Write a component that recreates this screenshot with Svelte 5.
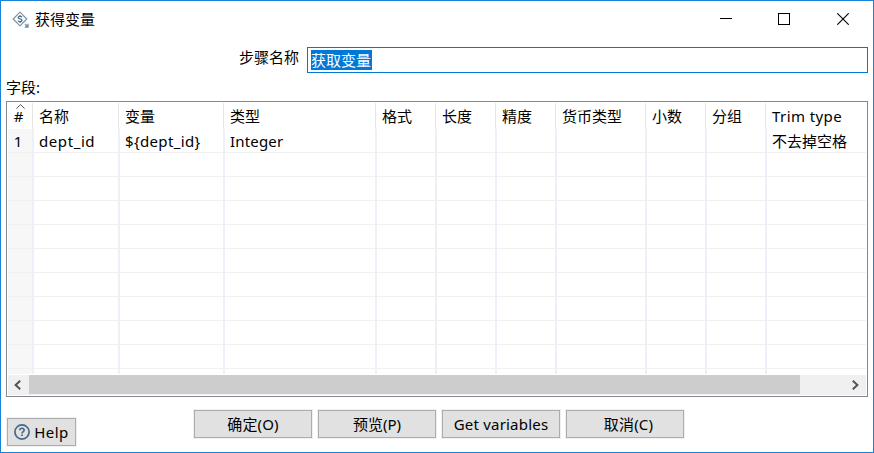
<script>
  const columns = [
    { label: '#', width: 24 },
    { label: '名称', width: 86 },
    { label: '变量', width: 105 },
    { label: '类型', width: 152 },
    { label: '格式', width: 60 },
    { label: '长度', width: 60 },
    { label: '精度', width: 60 },
    { label: '货币类型', width: 90 },
    { label: '小数', width: 60 },
    { label: '分组', width: 60 },
    { label: 'Trim type', width: 101, tracking: 0.42 }
  ];
  const template = columns.map((c) => `${c.width}px`).join(' ');
  const blank = columns.map(() => ({ text: '', tracking: 0 }));
  const filled = blank.map((c) => ({ ...c }));
  filled[0] = { text: '1', tracking: 0 };
  filled[1] = { text: 'dept_id', tracking: 0.58 };
  filled[2] = { text: '${dept_id}', tracking: 0.35 };
  filled[3] = { text: 'Integer', tracking: 0.18 };
  filled[10] = { text: '不去掉空格', tracking: 0 };
  const rows = [filled, ...Array.from({ length: 10 }, () => blank)];
  const actions = [
    { text: '确定(O)', tracking: 0.15 },
    { text: '预览(P)', tracking: 0 },
    { text: 'Get variables', tracking: 0.2 },
    { text: '取消(C)', tracking: 0.2, shift: 7 }
  ];
</script>

<div class="window">
  <header class="titlebar">
    <svg class="app" width="18" height="18" viewBox="0 0 18 18" fill="none">
      <path d="M8 1.2 14.8 8 8 14.8 1.2 8Z" stroke="#7b95aa" stroke-width="1.2" stroke-linejoin="round" />
      <path d="M10 6.1C9.5 5.2 6.2 5 6.2 6.7 6.2 8.3 10 7.5 10 9.3 10 11 6.6 10.9 6 9.8M8.1 4V5.2M8.1 10.7V12" stroke="#4a6f8d" stroke-width="1.3" />
      <path d="M13 13 15.5 15.5M16 12.8V16H12.8" stroke="#7290a6" stroke-width="1.3" />
    </svg>
    <h1>获得变量</h1>
    <div class="controls">
      <svg width="12" height="12" viewBox="0 0 12 12"><path d="M0 5.5H12" stroke="#000" /></svg>
      <svg width="12" height="12" viewBox="0 0 12 12"><rect x=".5" y=".5" width="11" height="11" fill="none" stroke="#000" /></svg>
      <svg width="12" height="12" viewBox="0 0 12 12"><path d="M.3.3 11.7 11.7M11.7.3.3 11.7" stroke="#000" stroke-width="1.1" /></svg>
    </div>
  </header>

  <div class="step">
    <span class="label">步骤名称</span>
    <div class="field"><span class="selected">获取变量</span></div>
  </div>
  <div class="caption">字段:</div>

  <section class="table">
    <div class="row head" style:grid-template-columns={template}>
      {#each columns as col, i}
        <div class="cell">
          {#if i === 0}
            <svg class="sort" width="9" height="5" viewBox="0 0 9 5"><path d="M.4 4.5 4.5.6 8.6 4.5" fill="none" stroke="#555" /></svg>
          {/if}
          <span style:letter-spacing={`${col.tracking ?? 0}px`}>{col.label}</span>
        </div>
      {/each}
    </div>
    <div class="body">
      {#each rows as row}
        <div class="row" style:grid-template-columns={template}>
          {#each row as value}
            <div class="cell"><span style:letter-spacing={`${value.tracking}px`}>{value.text}</span></div>
          {/each}
        </div>
      {/each}
    </div>
    <div class="scroll">
      <div class="arrow left"><svg width="7" height="10" viewBox="0 0 7 10"><path d="M6.2.7 1.6 5 6.2 9.3" fill="none" stroke="#555" stroke-width="2" /></svg></div>
      <div class="thumb"></div>
      <div class="arrow right"><svg width="7" height="10" viewBox="0 0 7 10"><path d="M.8.7 5.4 5 .8 9.3" fill="none" stroke="#555" stroke-width="2" /></svg></div>
    </div>
  </section>

  <footer>
    <button class="help">
      <svg width="16" height="16" viewBox="0 0 16 16" fill="none">
        <circle cx="8" cy="8" r="7.1" stroke="#44678a" stroke-width="1.7" />
        <path d="M5.8 6.3C5.9 3.6 10.3 3.7 10.2 6.2 10.1 7.6 8 7.7 8 9.5" stroke="#44678a" stroke-width="1.6" />
        <path d="M7.1 10.5H8.9V12.1H7.1Z" fill="#44678a" />
      </svg>
      <span>Help</span>
    </button>
    <div class="actions">
      {#each actions as action}
        <button style:padding-left={`${action.shift ?? 0}px`}>
          <span style:letter-spacing={`${action.tracking}px`}>{action.text}</span>
        </button>
      {/each}
    </div>
  </footer>
</div>

<style>
  :global(body) { margin: 0; background: #fff; }
  .window {
    box-sizing: border-box;
    width: 874px;
    height: 453px;
    border: 1px solid #1883d7;
    background: #fff;
    color: #000;
    font: 400 15px/20px "Noto Sans", "Noto Sans CJK SC", sans-serif;
    display: flex;
    flex-direction: column;
    overflow: hidden;
    white-space: nowrap;
  }
  .titlebar { height: 46px; display: flex; align-items: flex-start; flex: none; }
  .app { margin: 10px 0 0 11px; }
  h1 { margin: 8px 0 0 5px; font-size: 15px; font-weight: inherit; line-height: 20px; }
  .controls { margin: 12px 24px 0 auto; display: flex; gap: 46px; }
  .controls svg { display: block; }
  .controls svg:last-child { margin-left: 1px; }
  .step { display: flex; height: 26px; flex: none; padding-right: 5px; }
  .label { width: 306px; box-sizing: border-box; padding-left: 238px; }
  .field {
    flex: 1;
    box-sizing: border-box;
    border: 1px solid #0078d7;
    padding: 2px 3px;
  }
  .selected { display: block; width: 61px; height: 20px; background: #0078d7; color: #fff; line-height: 20px; }
  .caption { height: 28px; padding: 4px 0 0 5px; box-sizing: border-box; flex: none; }
  .table {
    box-sizing: border-box;
    width: 862px;
    height: 296px;
    margin-left: 5px;
    border: 1px solid #828790;
    padding: 1px;
    flex: none;
  }
  .row { display: grid; height: 24px; box-sizing: border-box; border-bottom: 1px solid #f0f0f0; }
  .cell { border-left: 2px solid #edf0f8; padding-left: 5px; line-height: 24px; height: 23px; min-width: 0; }
  .cell:first-child { border-left: 0; padding: 0 4px 0 0; text-align: center; background: #f7f7f7; }
  .head { height: 26px; border: 0; }
  .head .cell { border-left: 1px solid #e5e5e5; padding-left: 6px; line-height: 26px; height: 26px; }
  .head .cell:first-child { position: relative; background: #fff; border: 0; padding: 0 3px 0 0; }
  .sort { position: absolute; left: 8px; top: 1px; }
  .body { height: 245px; overflow: hidden; }
  .scroll { margin-top: 1px; height: 20px; background: #f0f0f0; display: flex; }
  .arrow { display: flex; align-items: center; }
  .left { width: 21px; padding-left: 6px; box-sizing: border-box; }
  .right { margin-left: auto; padding-right: 7px; }
  .thumb { width: 771px; height: 19px; background: #cdcdcd; }
  footer { display: flex; padding: 13px 0 0 6px; }
  button {
    box-sizing: border-box;
    width: 118px;
    height: 28px;
    padding: 0;
    border: 1px solid #adadad;
    box-shadow: 0 0 0 1px #f0f0f0;
    background: #e1e1e1;
    color: #000;
    font: inherit;
    display: flex;
    align-items: center;
    justify-content: center;
  }
  .help { width: 69px; margin-top: 8px; gap: 4px; letter-spacing: 0.4px; }
  .actions { display: flex; gap: 6px; margin-left: 118px; }
</style>
